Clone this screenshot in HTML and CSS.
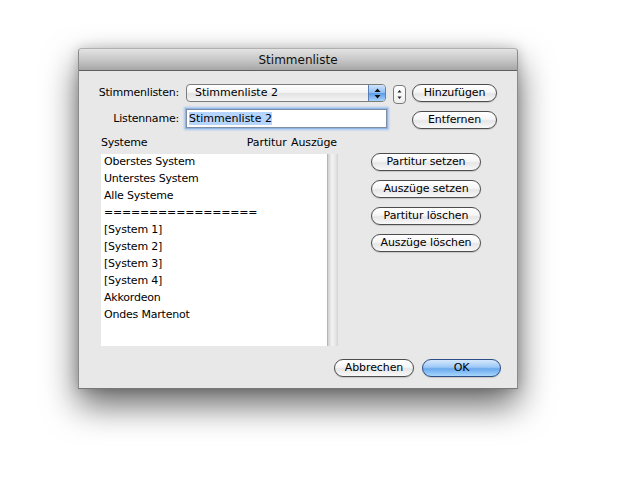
FILE: index.html
```html
<!DOCTYPE html>
<html lang="de">
<head>
<meta charset="utf-8">
<title>Stimmenliste</title>
<link rel="stylesheet" href="styles.css">
</head>
<body>
<div class="window">
  <div class="titlebar">Stimmenliste</div>
  <div class="content">
    <div class="row row1">
      <span class="lbl">Stimmenlisten:</span>
      <div class="popup">
        <span class="popup-text">Stimmenliste 2</span>
        <span class="popup-arrows">
          <svg width="7" height="11" viewBox="0 0 7 11"><path d="M3.5 0.5 L6.5 4 L0.5 4 Z M3.5 10.5 L6.5 7 L0.5 7 Z" fill="#111"/></svg>
        </span>
      </div>
      <div class="stepper">
        <svg width="5" height="11" viewBox="0 0 5 11"><path d="M2.5 1 L4.5 3.5 L0.5 3.5 Z M2.5 10 L4.5 7.5 L0.5 7.5 Z" fill="#222"/></svg>
      </div>
      <button class="btn btn-side">Hinzufügen</button>
    </div>
    <div class="row row2">
      <span class="lbl">Listenname:</span>
      <div class="field"><span class="sel">Stimmenliste 2</span></div>
      <button class="btn btn-side btn-low">Entfernen</button>
    </div>
    <div class="middle">
      <div class="listcol">
        <div class="listhead"><span>Systeme</span><span class="cols">Partitur Auszüge</span></div>
        <div class="listbox">
          <ul class="items">
            <li>Oberstes System</li>
            <li>Unterstes System</li>
            <li>Alle Systeme</li>
            <li>=================</li>
            <li>[System 1]</li>
            <li>[System 2]</li>
            <li>[System 3]</li>
            <li>[System 4]</li>
            <li>Akkordeon</li>
            <li>Ondes Martenot</li>
          </ul>
          <div class="scroll"></div>
        </div>
      </div>
      <div class="actions">
        <button class="btn btn-act">Partitur setzen</button>
        <button class="btn btn-act">Auszüge setzen</button>
        <button class="btn btn-act">Partitur löschen</button>
        <button class="btn btn-act">Auszüge löschen</button>
      </div>
    </div>
    <div class="footer">
      <button class="btn btn-cancel">Abbrechen</button>
      <button class="btn btn-ok">OK</button>
    </div>
  </div>
</div>
</body>
</html>
```
FILE: styles.css
```css
html, body {
  margin: 0;
  padding: 0;
  background: #ffffff;
}
body {
  width: 637px;
  height: 477px;
  overflow: hidden;
  font-family: "DejaVu Sans", "Liberation Sans", sans-serif;
  font-size: 11px;
  color: #000;
}
.window {
  margin: 48px 0 0 78px;
  width: 438px;
  height: 339px;
  border: 1px solid #8a8a8a;
  border-top-color: #b0b0b0;
  border-bottom-color: #777;
  border-radius: 4px 4px 0 0;
  background: #e8e8e8;
  box-shadow: 0 16px 34px rgba(0, 0, 0, 0.6), 0 0 12px rgba(0, 0, 0, 0.18);
  display: flex;
  flex-direction: column;
}
.titlebar {
  height: 21px;
  border-radius: 4px 4px 0 0;
  background: linear-gradient(#e3e3e3, #c8c8c8 50%, #a6a6a6);
  border-bottom: 1px solid #5f5f5f;
  text-align: center;
  font-size: 12px;
  line-height: 22px;
  color: #111;
}
.content {
  flex: 1;
  padding: 13px 0 0 0;
  display: flex;
  flex-direction: column;
}
.row {
  display: flex;
  align-items: flex-start;
}
.row1 {
  height: 18px;
}
.row2 {
  margin-top: 7px;
  height: 20px;
}
.lbl {
  width: 100px;
  text-align: right;
  line-height: 18px;
  letter-spacing: -0.2px;
}
.row2 .lbl {
  line-height: 19px;
}
.popup {
  margin-left: 7px;
  width: 198px;
  height: 16px;
  border: 1px solid #7c7c7c;
  border-radius: 4px;
  background: linear-gradient(#ffffff, #f2f2f2 50%, #e2e2e2 51%, #f4f4f4);
  display: flex;
  overflow: hidden;
}
.popup-text {
  flex: 1;
  padding-left: 8px;
  line-height: 16px;
}
.popup-arrows {
  width: 16px;
  border-left: 1px solid #5a7fb8;
  background: linear-gradient(#cfe4fb, #8dbdf2 50%, #5b9be6 51%, #a9d3fb);
  display: flex;
  align-items: center;
  justify-content: center;
}
.stepper {
  margin-left: 7px;
  width: 11px;
  height: 17px;
  margin-top: 1px;
  border: 1px solid #7a7a7a;
  border-radius: 4px;
  background: linear-gradient(#ffffff, #eeeeee);
  display: flex;
  align-items: center;
  justify-content: center;
}
.btn {
  font-family: "DejaVu Sans", "Liberation Sans", sans-serif;
  font-size: 11px;
  color: #000;
  height: 18px;
  padding: 0;
  border: 1px solid #4d4d4d;
  border-radius: 9px;
  background: linear-gradient(#ffffff, #f6f6f6 45%, #e6e6e6 55%, #f8f8f8);
  box-shadow: 0 1px 1px rgba(0, 0, 0, 0.15);
  line-height: 16px;
  letter-spacing: -0.1px;
}
.btn-side {
  margin-left: 6px;
  width: 85px;
}
.btn-low {
  margin-left: 25px;
  margin-top: 2px;
}
.field {
  margin-left: 7px;
  width: 197px;
  height: 17px;
  border: 1px solid #7f8fa8;
  background: #fff;
  box-shadow: 0 0 0 1px #8fb6e6, 0 0 2px 2px #a7c6ef;
  padding-left: 2px;
  line-height: 17px;
}
.sel {
  background: #b5d5ff;
}
.middle {
  margin-top: 8px;
  display: flex;
}
.listcol {
  margin-left: 22px;
  width: 237px;
}
.listhead {
  display: flex;
  justify-content: space-between;
  height: 17px;
  line-height: 12px;
  letter-spacing: -0.2px;
}
.cols {
  letter-spacing: -0.1px;
  word-spacing: 1px;
  padding-right: 1px;
}
.listbox {
  height: 192px;
  display: flex;
  background: #fff;
}
.items {
  list-style: none;
  margin: 0;
  padding: 0 0 0 3px;
  flex: 1;
}
.items li {
  height: 17px;
  line-height: 15px;
  letter-spacing: -0.2px;
}
.scroll {
  width: 10px;
  border-left: 1px solid #b5b5b5;
  background: linear-gradient(90deg, #cfcfcf, #f4f4f4 40%, #e9e9e9 70%, #d3d3d3);
}
.actions {
  margin-left: 33px;
  padding-top: 16px;
  display: flex;
  flex-direction: column;
  gap: 9px;
}
.btn-act {
  width: 110px;
}
.footer {
  margin-top: 13px;
  display: flex;
  justify-content: flex-end;
  gap: 8px;
  padding-right: 16px;
}
.btn-cancel {
  width: 80px;
}
.btn-ok {
  width: 79px;
  border-color: #2c4d86;
  background: linear-gradient(#d6e9fc, #9cc8f6 45%, #6aa8ee 55%, #a6d6fb);
}
```
